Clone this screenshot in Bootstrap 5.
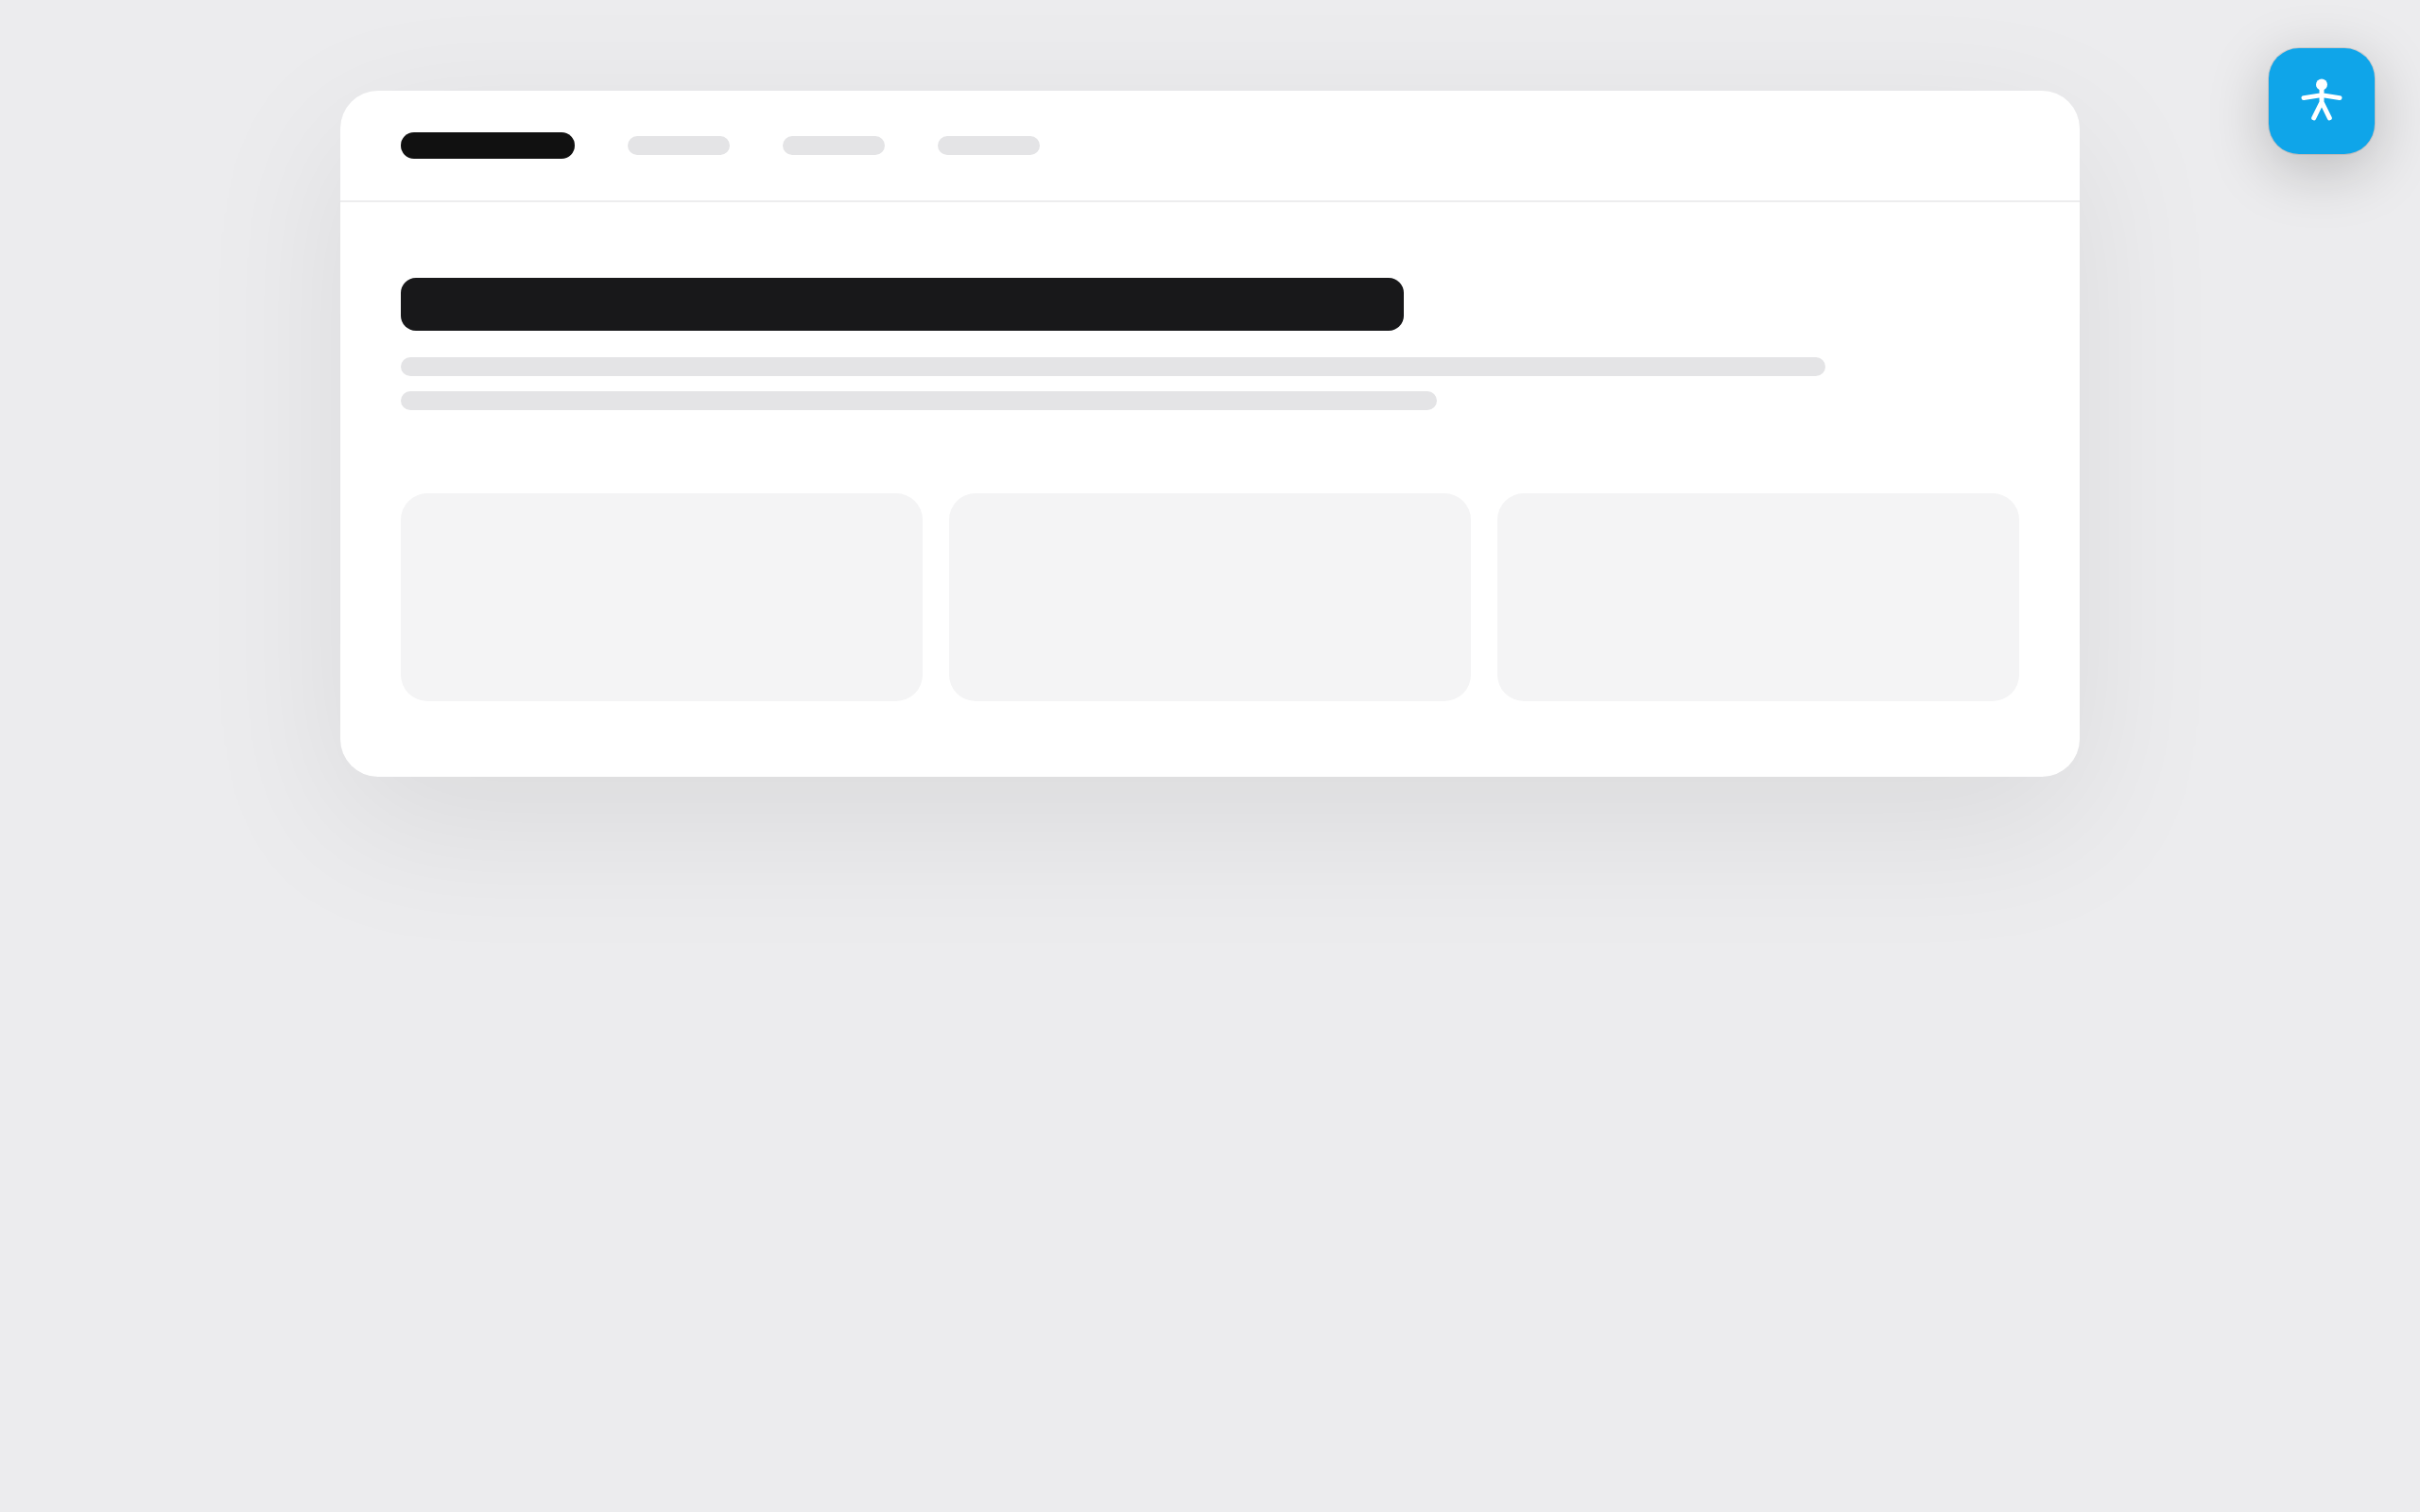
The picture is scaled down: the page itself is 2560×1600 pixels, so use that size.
<!DOCTYPE html>
<html lang="en">
<head>
<meta charset="utf-8">
<meta name="viewport" content="width=device-width, initial-scale=1">
<title>Page preview</title>
<link href="https://cdn.jsdelivr.net/npm/bootstrap@5.3.0/dist/css/bootstrap.min.css" rel="stylesheet">
<style>
  body { background: #ececee; font-family: Inter, "Liberation Sans", sans-serif; }
  .stage { padding: 96px 24px; }
  .site-frame {
    max-width: 1840px;
    border-radius: 40px;
    box-shadow: 0 48px 160px rgba(0, 0, 0, .08);
  }
  .site-header { gap: 56px; padding: 44px 64px; border-bottom: 2px solid #ededee; }
  .logo-bar { width: 184px; height: 28px; border-radius: 14px; background: #111; }
  .nav-row { gap: 56px; }
  .nav-bar-item { width: 108px; }
  .text-bar { height: 20px; border-radius: 10px; background: #e4e4e6; }
  .site-body { padding: 80px 64px; }
  .title-bar { width: 62%; height: 56px; border-radius: 16px; background: #18181a; margin-bottom: 28px; }
  .copy-stack { gap: 16px; margin-bottom: 88px; }
  .copy-long { width: 88%; }
  .copy-short { width: 64%; }
  .tile-row { gap: 28px; }
  .tile { height: 220px; border-radius: 28px; background: #f4f4f5; }
  .a11y-btn {
    top: 51px; right: 48px; width: 112px; height: 112px;
    border: 0; border-radius: 32px; background: #0fa5e9; color: #fff;
    box-shadow: 0 16px 64px rgba(0, 0, 0, .22), 0 0 0 1px rgba(0, 0, 0, .1);
  }
</style>
</head>
<body class="min-vh-100">
<main class="stage min-vh-100">
  <div class="site-frame bg-white mx-auto">
    <header class="site-header d-flex align-items-center">
      <div class="logo-bar"></div>
      <nav class="nav-row d-flex" aria-label="Main">
        <div class="text-bar nav-bar-item"></div>
        <div class="text-bar nav-bar-item"></div>
        <div class="text-bar nav-bar-item"></div>
      </nav>
    </header>
    <section class="site-body">
      <div class="title-bar"></div>
      <div class="copy-stack d-flex flex-column">
        <div class="text-bar copy-long"></div>
        <div class="text-bar copy-short"></div>
      </div>
      <div class="tile-row d-flex">
        <div class="tile flex-fill"></div>
        <div class="tile flex-fill"></div>
        <div class="tile flex-fill"></div>
      </div>
    </section>
  </div>
</main>
<button type="button" class="a11y-btn position-fixed d-flex align-items-center justify-content-center p-0" aria-label="Accessibility">
  <svg width="52" height="52" viewBox="0 0 52 52" fill="none" stroke="currentColor" stroke-width="5" stroke-linecap="round" stroke-linejoin="round" aria-hidden="true">
    <circle cx="26" cy="8.500" r="6" fill="currentColor" stroke="none"/>
    <path d="M7 22.600 L26 19.600 L45 22.600 M26 12 V27 M17.700 43.800 L26 27 L34.300 43.800"/>
  </svg>
</button>
<script src="https://cdn.jsdelivr.net/npm/bootstrap@5.3.0/dist/js/bootstrap.bundle.min.js"></script>
</body>
</html>
